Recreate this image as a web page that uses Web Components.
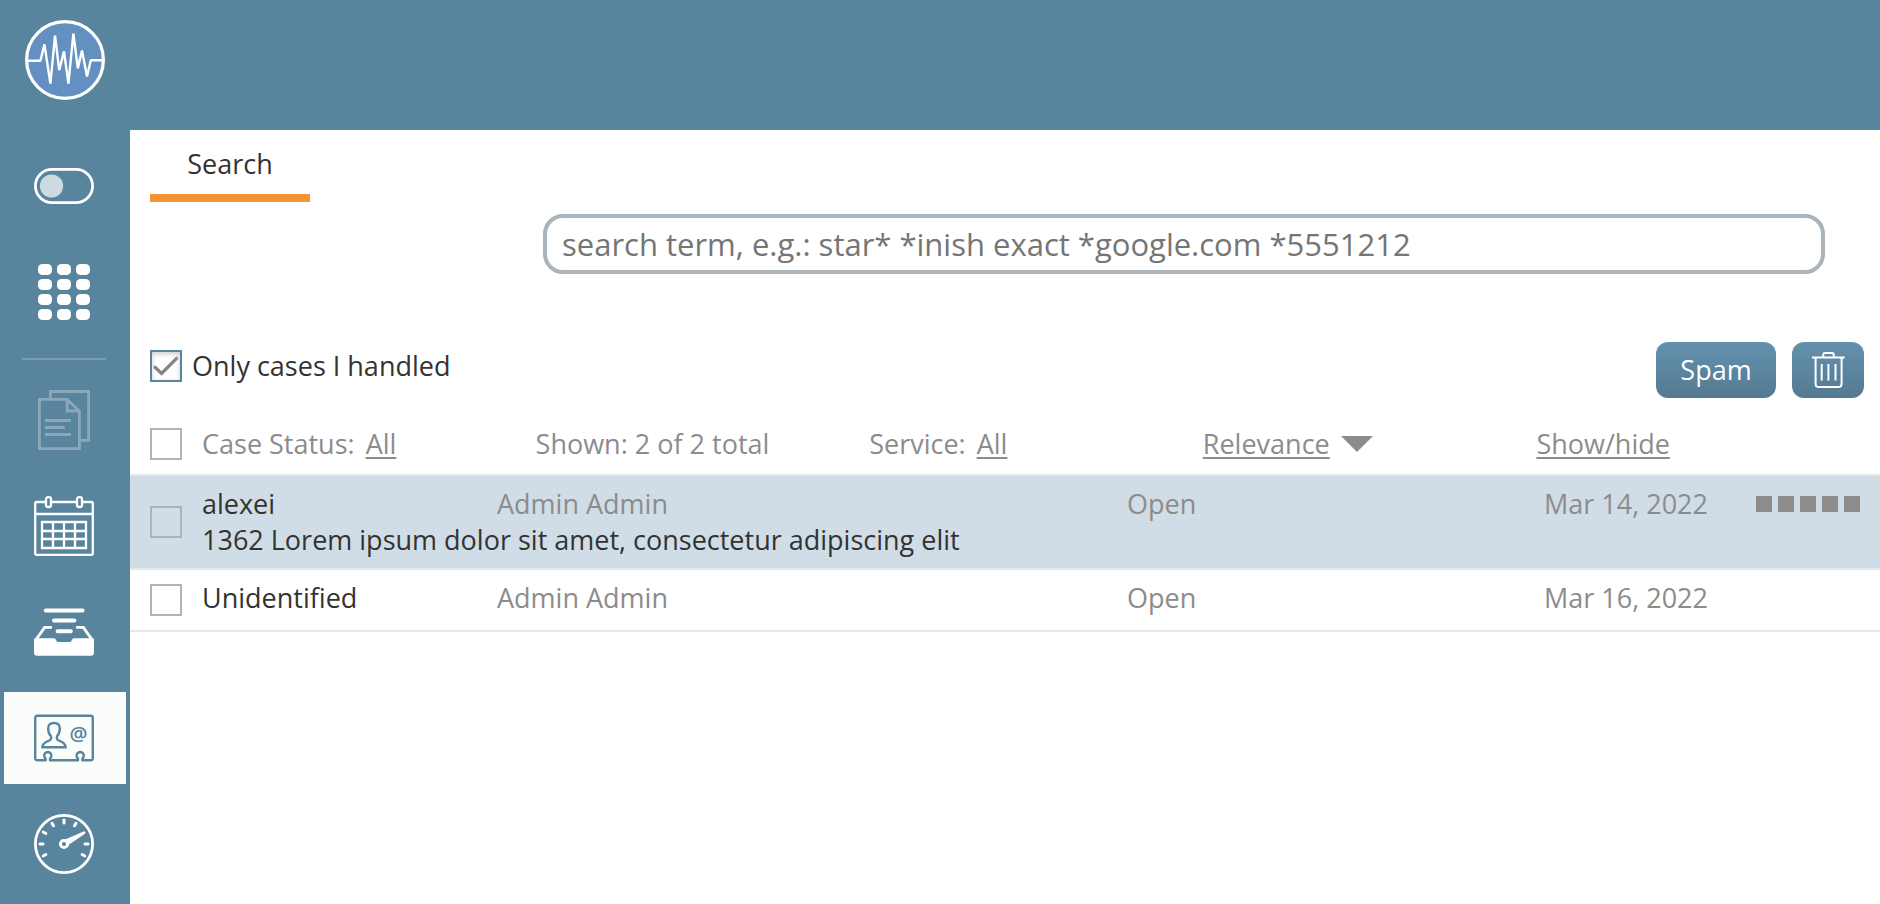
<!DOCTYPE html>
<html lang="en">
<head>
<meta charset="utf-8">
<title>Case search</title>
<style>
  html, body { margin: 0; min-height: 100%; background: #fff; }
  body {
    --brand: #59849d;
    --ink: #333;
    --muted: #8c8c8c;
    --line: #e6e7e7;
    --field: #aab5bb;
    font: 27px/36px "Open Sans", sans-serif;
    color: var(--ink);
  }
</style>
</head>
<body>
<case-app></case-app>

<script>
const define = (name, html, setup) => {
  const template = document.createElement('template');
  template.innerHTML = html;
  customElements.define(name, class extends HTMLElement {
    constructor() {
      super();
      this.attachShadow({ mode: 'open' }).append(template.content.cloneNode(true));
    }
    connectedCallback() {
      if (setup) setup(this, this.shadowRoot);
    }
  });
};

const grid = [2, 17, 32, 47].map(y => [4, 23, 42].map(x =>
  `<rect x="${x}" y="${y}" width="14" height="11" rx="4.6"/>`).join('')).join('');
const ticks = [0, 30, 150, 180, 210, 240, 270, 300].map(a =>
  `<path d="M51 30h3" transform="rotate(${a} 30 30)"/>`).join('');

const icons = {
  toggle: `<rect x="1.4" y="13.4" width="57.2" height="33.2" rx="16.6" fill="none" stroke="currentColor" stroke-width="2.8"/>
    <circle cx="17.5" cy="30" r="11.6" fill="#ccdae1"/>`,
  dialpad: `<g fill="currentColor">${grid}</g>`,
  documents: `<g fill="none" stroke="#8aa8ba" stroke-width="2.8">
    <path d="M16.4 9V1.5H54.6V50.4H47"/>
    <path d="M5.4 9.4H33L45.4 21V58.6H5.4Z"/><path d="M33.2 9.4V21H45.4" />
    <path d="M11 30.5H37M11 37.5H30.8M11 44.5H37"/></g>`,
  calendar: `<g fill="none" stroke="currentColor" stroke-width="2.3">
    <rect x="1.2" y="6" width="57.6" height="52.8" rx="1.5"/><path d="M1 18H59"/>
    <rect x="12" y="1.2" width="5" height="9.8" rx="2" fill="#59849d"/>
    <rect x="43" y="1.2" width="5" height="9.8" rx="2" fill="#59849d"/>
    <path d="M8 26H52V52H8ZM19 26V52M30 26V52M41 26V52M8 35H52M8 43H52"/></g>`,
  inbox: `<g fill="none" stroke="currentColor" stroke-width="4" stroke-linecap="round">
    <path d="M11.8 8.4H48.6M20 18.5H40.4M23.6 29.3H36.8"/>
    <path d="M16.8 25.4H10.6L1.8 38M43.2 25.4H49.4L58.2 38" stroke-width="2.8"/></g>
    <path d="M0 37.4Q0 36.2 1.5 36.2H19.8C22.6 36.2 21.4 40 25 40H35C38.6 40 37.4 36.2 40.2 36.2H58.5Q60 36.2 60 37.4V50.5Q60 53.8 56.7 53.8H3.3Q0 53.8 0 50.5Z" fill="currentColor"/>`,
  contacts: `<g fill="none" stroke="currentColor" stroke-width="2.4">
    <path d="M11.6 52.2H3.4Q1.2 52.2 1.2 50V10Q1.2 7.8 3.4 7.8H56.6Q58.8 7.8 58.8 10V50Q58.8 52.2 56.6 52.2H48.4V50.4A3.6 3.6 0 1 0 44 50.4V52.2H16V50.4A3.6 3.6 0 1 0 11.6 50.4Z" stroke-linejoin="round"/>
    <path d="M8.4 39.2C8.6 35.2 11.6 33.8 15 32.6C17.6 31.6 17.4 29.4 16.8 28C14.6 25.8 14.2 23.4 14.2 20.4C14.2 16.6 16.6 15 20 15S25.8 16.6 25.8 20.4C25.8 23.4 25.4 25.8 23.2 28C22.6 29.4 22.4 31.6 25 32.6C28.4 33.8 31.4 35.2 31.6 39.2Z"/></g>
    <text x="44.5" y="33" text-anchor="middle" font-family="Open Sans, sans-serif" font-size="20" font-weight="600" fill="currentColor">@</text>`,
  gauge: `<g fill="none" stroke="currentColor" stroke-width="3" stroke-linecap="round">
    <circle cx="30" cy="30" r="28.6" stroke-width="2.8"/><circle cx="30" cy="30" r="3.6"/>${ticks}</g>
    <path d="M31.2 25.4L50 17.2Q52.4 18 51 19.8L34.4 31Z" fill="currentColor"/>`
};

define('app-logo', `
  <style>
    :host { display: block; }
    a, svg { display: block; }
  </style>
  <a href="#" aria-label="Home"><svg width="80" height="80" viewBox="0 0 80 80">
    <circle cx="40" cy="40" r="38.4" fill="#6390c1" stroke="#fff" stroke-width="3.2"/>
    <path d="M3 40.8H15.4L19.4 24.4L25.4 63.6L30 15.6L34.2 50.2L39 31.4L43.4 63.6L48.4 13.6L52.8 48.4L57 30.6L62 56.4L65.8 40.2H77" fill="none" stroke="#fff" stroke-width="2.4" stroke-linejoin="bevel"/>
  </svg></a>`);

define('nav-item', `
  <style>
    :host { display: block; color: #fff; }
    :host([active]) { color: var(--brand); background: #fbfdfb; }
    button { display: block; width: 100%; padding: 16px 30px; border: 0; background: none; color: inherit; text-align: left; cursor: pointer; }
    svg { display: block; width: 60px; height: 60px; }
  </style>
  <button type="button"><svg viewBox="0 0 60 60"></svg></button>`,
  (host, root) => {
    root.querySelector('svg').innerHTML = icons[host.getAttribute('icon')];
    root.querySelector('button').setAttribute('aria-label', host.getAttribute('label'));
  });

define('app-nav', `
  <style>
    :host { display: block; }
    nav { display: flex; flex-direction: column; gap: 14px; padding: 10px 4px 14px; }
    hr { width: 84px; height: 2px; margin: 6px 0 0 18px; border: 0; background: #799cb1; }
  </style>
  <nav>
    <nav-item icon="toggle" label="Availability"></nav-item>
    <nav-item icon="dialpad" label="Dial pad"></nav-item>
    <hr>
    <nav-item icon="documents" label="Documents"></nav-item>
    <nav-item icon="calendar" label="Calendar"></nav-item>
    <nav-item icon="inbox" label="Inbox"></nav-item>
    <nav-item icon="contacts" label="Contacts" active></nav-item>
    <nav-item icon="gauge" label="Dashboard"></nav-item>
  </nav>`);

define('tab-bar', `
  <style>
    :host { display: flex; padding: 0 20px; }
    button { min-width: 160px; padding: 16px 20px 12px; border: 0; border-bottom: 8px solid #f29434; background: none; font: inherit; color: inherit; }
  </style>
  <button type="button"><slot></slot></button>`);

define('search-field', `
  <style>
    :host { display: block; }
    input { display: block; box-sizing: border-box; width: 100%; height: 60px; padding: 0 15px; border: 4px solid var(--field); border-radius: 20px; background: #fff; font: inherit; font-size: 31px; color: var(--ink); }
    input::placeholder { color: #757575; opacity: 1; }
  </style>
  <input type="text" aria-label="Search term" placeholder="search term, e.g.: star* *inish exact *google.com *5551212">`);

define('check-box', `
  <style>
    :host { display: block; }
    label { display: flex; align-items: center; gap: 10px; }
    input { appearance: none; flex: none; box-sizing: border-box; width: 32px; height: 32px; margin: 0; border: 2px solid var(--field); }
    input:checked { border-color: var(--brand); box-shadow: inset 0 2px 5px #ccc;
      background: #fff url('data:image/svg+xml,<svg xmlns="http://www.w3.org/2000/svg" viewBox="0 0 28 28"><path d="M3 15.2L9.6 21.4L24.6 6.4" fill="none" stroke="%23858585" stroke-width="3.4" stroke-linecap="round"/></svg>'); }
  </style>
  <label><input type="checkbox"><slot></slot></label>`,
  (host, root) => {
    const input = root.querySelector('input');
    input.checked = host.hasAttribute('checked');
    if (host.hasAttribute('label')) input.setAttribute('aria-label', host.getAttribute('label'));
  });

define('action-button', `
  <style>
    :host { display: block; }
    button { display: flex; align-items: center; justify-content: center; min-width: 72px; height: 56px; padding: 0; border: 0; border-radius: 12px; background: linear-gradient(#6391ae, #547a92); font: inherit; color: #fff; cursor: pointer; }
    :host([wide]) button { min-width: 120px; }
  </style>
  <button type="button"><slot></slot></button>`,
  (host, root) => {
    if (host.hasAttribute('label')) root.querySelector('button').setAttribute('aria-label', host.getAttribute('label'));
  });

define('trash-icon', `
  <style>:host, svg { display: block; }</style>
  <svg width="36" height="36" viewBox="0 0 36 36" fill="none" stroke="#fff" stroke-width="2">
    <path d="M2 5.6H34.6M13.2 5V3Q13.2 1 15 1H22Q23.8 1 23.8 3V5M5.6 6V31.4Q5.6 35 9 35H28Q31.6 35 31.6 31.4V6M11.7 12V28.6M18.4 12V28.6M25.5 12V28.6"/>
  </svg>`);

define('case-filters', `
  <style>
    :host { display: flex; align-items: center; gap: 20px; padding: 14px 10px 12px 20px; border-bottom: 2px solid var(--line); color: var(--muted); }
    .fields { flex: 1; display: grid; grid-template-columns: repeat(5, 1fr); }
    .fields > div { display: flex; align-items: center; gap: 11px; white-space: nowrap; }
    a { color: inherit; text-decoration-thickness: 2px; text-underline-offset: 3px; text-decoration-skip-ink: none; }
  </style>
  <check-box label="Select all cases"></check-box>
  <div class="fields">
    <div><span>Case Status:</span><a href="#">All</a></div>
    <div>Shown: 2 of 2 total</div>
    <div><span>Service:</span><a href="#">All</a></div>
    <div><a href="#">Relevance</a><svg width="32" height="16" viewBox="0 0 32 16"><path d="M0 0H32L16 16Z" fill="#8c8c8c"/></svg></div>
    <div><a href="#">Show/hide</a></div>
  </div>`);

define('case-table', `
  <style>
    :host { display: block; }
    table { width: 100%; table-layout: fixed; border-collapse: separate; border-spacing: 0; color: var(--muted); }
    td { height: 36px; padding: 10px 0 14px; text-align: left; vertical-align: top; white-space: nowrap; }
    tr.last td, td.last { border-bottom: 2px solid var(--line); }
    td.pick { padding: 0 0 0 20px; vertical-align: middle; }
    tbody.selected { background: #d0dde6; }
    .selected tr:first-child td:not(.pick) { padding-bottom: 0; }
    .selected tr.last td { padding: 0 0 10px; }
    .name { color: var(--ink); }
    .rank { display: flex; align-items: center; gap: 6px; height: 36px; }
    .rank i { width: 16px; height: 16px; background: var(--muted); }
  </style>
  <table aria-label="Cases">
    <colgroup>
      <col style="width:72px"><col style="width:295px"><col style="width:36%"><col><col style="width:212px"><col style="width:124px">
    </colgroup>
    <tbody class="selected">
      <tr>
        <td class="pick last" rowspan="2"><check-box label="Select alexei"></check-box></td>
        <td class="name">alexei</td><td>Admin Admin</td><td>Open</td><td>Mar 14, 2022</td>
        <td><div class="rank"><i></i><i></i><i></i><i></i><i></i></div></td>
      </tr>
      <tr class="last"><td class="name" colspan="5">1362 Lorem ipsum dolor sit amet, consectetur adipiscing elit</td></tr>
    </tbody>
    <tbody>
      <tr class="last">
        <td class="pick"><check-box label="Select Unidentified"></check-box></td>
        <td class="name">Unidentified</td><td>Admin Admin</td><td>Open</td><td>Mar 16, 2022</td><td></td>
      </tr>
    </tbody>
  </table>`);

define('case-app', `
  <style>
    :host { display: grid; grid-template: 130px 1fr / 130px 1fr; min-height: 100vh; background: var(--brand); }
    header { grid-column: 1 / -1; padding: 20px 25px; }
    main { background: #fff; min-width: 0; }
    search-field { margin: 12px 55px 68px 413px; }
    .actions { display: flex; align-items: flex-start; gap: 16px; padding: 0 16px 14px 20px; }
    .actions check-box { margin: 6px auto 0 0; }
  </style>
  <header><app-logo></app-logo></header>
  <app-nav></app-nav>
  <main>
    <tab-bar>Search</tab-bar>
    <search-field></search-field>
    <div class="actions">
      <check-box checked>Only cases I handled</check-box>
      <action-button wide>Spam</action-button>
      <action-button label="Delete"><trash-icon></trash-icon></action-button>
    </div>
    <case-filters></case-filters>
    <case-table></case-table>
  </main>`);
</script>
</body>
</html>
